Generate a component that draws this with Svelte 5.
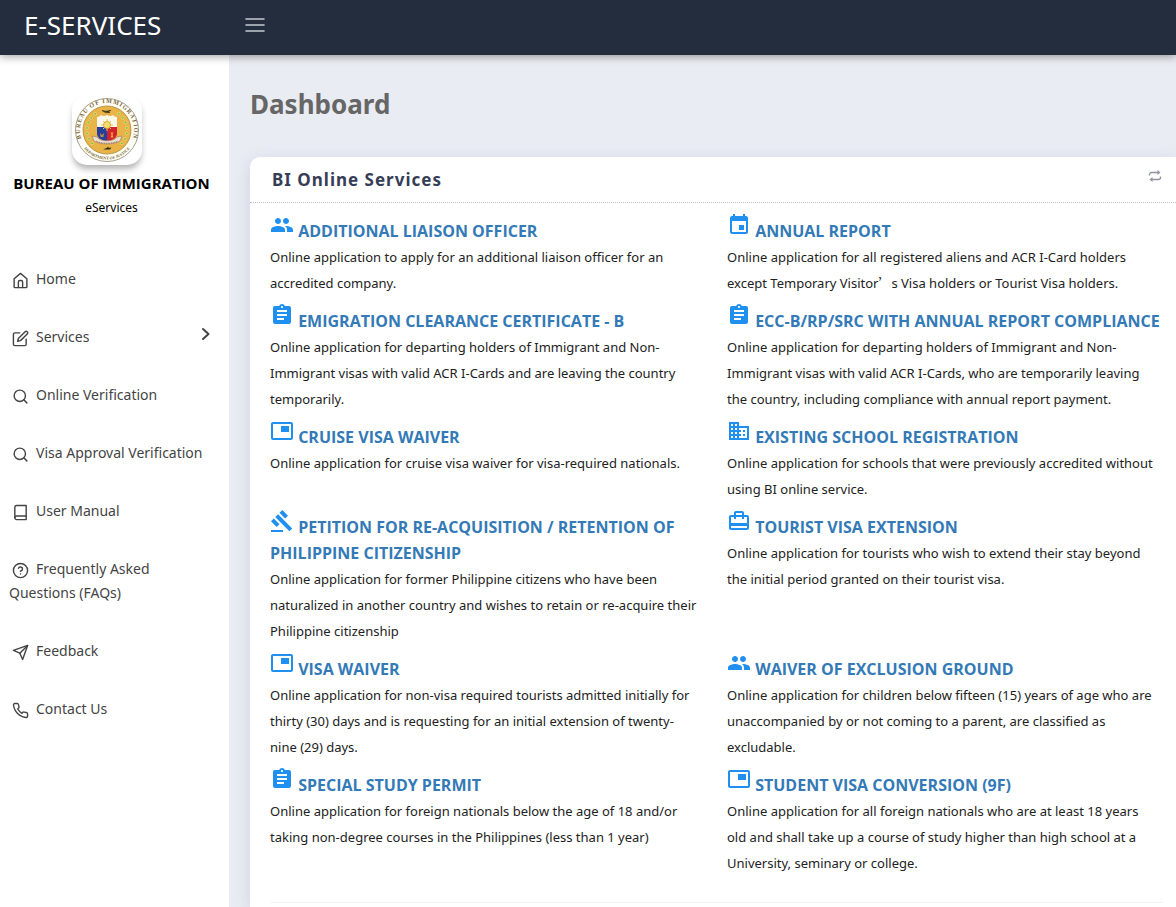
<script>
  const nav = [
    { label: 'Home', icon: 'home' },
    { label: 'Services', icon: 'edit', more: true },
    { label: 'Online Verification', icon: 'search' },
    { label: 'Visa Approval Verification', icon: 'search' },
    { label: 'User Manual', icon: 'book' },
    { label: 'Frequently Asked Questions (FAQs)', icon: 'help' },
    { label: 'Feedback', icon: 'send' },
    { label: 'Contact Us', icon: 'phone' }
  ];

  const lineIcons = {
    home: ['M3 9.5 12 2l9 7.5V21a1 1 0 0 1-1 1H4a1 1 0 0 1-1-1z', 'M9 22v-8a2 2 0 0 1 2-2h2a2 2 0 0 1 2 2v8'],
    edit: ['M11 4H4a2 2 0 0 0-2 2v14a2 2 0 0 0 2 2h14a2 2 0 0 0 2-2v-7', 'M18.5 2.5a2.121 2.121 0 0 1 3 3L12 15l-4 1 1-4z'],
    search: ['M3 11a8 8 0 1 0 16 0a8 8 0 1 0-16 0', 'M21 21l-4.35-4.35'],
    book: ['M4 19.5A2.5 2.5 0 0 1 6.5 17H20', 'M6.5 2H20v20H6.5A2.5 2.5 0 0 1 4 19.5v-15A2.5 2.5 0 0 1 6.5 2z'],
    help: ['M2 12a10 10 0 1 0 20 0a10 10 0 1 0-20 0', 'M9.09 9a3 3 0 0 1 5.83 1c0 2-3 3-3 3', 'M12 17h.01'],
    send: ['M22 2 11 13', 'M22 2l-7 20-4-9-9-4z'],
    phone: ['M22 16.92v3a2 2 0 0 1-2.18 2 19.79 19.79 0 0 1-8.63-3.07 19.5 19.5 0 0 1-6-6 19.79 19.79 0 0 1-3.07-8.67A2 2 0 0 1 4.11 2h3a2 2 0 0 1 2 1.72c.127.96.361 1.903.7 2.81a2 2 0 0 1-.45 2.11L8.09 9.91a16 16 0 0 0 6 6l1.27-1.27a2 2 0 0 1 2.11-.45c.907.339 1.85.573 2.81.7A2 2 0 0 1 22 16.92z']
  };

  const solidIcons = {
    group: 'M16 11c1.66 0 2.99-1.34 2.99-3S17.66 5 16 5s-3 1.34-3 3 1.34 3 3 3zm-8 0c1.66 0 2.99-1.34 2.99-3S9.66 5 8 5 5 6.34 5 8s1.34 3 3 3zm0 2c-2.33 0-7 1.17-7 3.5V19h14v-2.500c0-2.330-4.670-3.500-7-3.500zm8 0c-.29 0-.62.02-.97.05 1.160.84 1.970 1.970 1.970 3.450V19h6v-2.500c0-2.330-4.670-3.500-7-3.500z',
    event: 'M17 12h-5v5h5v-5zM16 1v2H8V1H6v2H5c-1.110 0-1.990.9-1.990 2L3 19a2 2 0 0 0 2 2h14c1.100 0 2-.9 2-2V5c0-1.100-.9-2-2-2h-1V1h-2zm3 18H5V8h14v11z',
    clipboard: 'M19 3h-4.180C14.400 1.840 13.300 1 12 1s-2.400.84-2.820 2H5c-1.100 0-2 .9-2 2v14c0 1.100.9 2 2 2h14c1.100 0 2-.9 2-2V5c0-1.100-.9-2-2-2zm-7 0c.55 0 1 .45 1 1s-.45 1-1 1-1-.45-1-1 .45-1 1-1zm2 14H7v-2h7v2zm3-4H7v-2h10v2zm0-4H7V7h10v2z',
    pip: 'M19 7h-8v6h8V7zm2-4H3c-1.100 0-2 .9-2 2v14c0 1.100.9 1.980 2 1.980h18c1.100 0 2-.88 2-1.980V5c0-1.100-.9-2-2-2zm0 16.010H3V4.980h18v14.030z',
    building: 'M12 7V3H2v18h20V7H12zM6 19H4v-2h2v2zm0-4H4v-2h2v2zm0-4H4V9h2v2zm0-4H4V5h2v2zm4 12H8v-2h2v2zm0-4H8v-2h2v2zm0-4H8V9h2v2zm0-4H8V5h2v2zm10 12h-8v-2h2v-2h-2v-2h2v-2h-2V9h8v10zm-2-8h-2v2h2v-2zm0 4h-2v2h2v-2z',
    gavel: 'M1 21h12v2H1zM5.245 8.070l2.830-2.830 14.140 14.140-2.830 2.830zM12.317 1l5.657 5.656-2.830 2.830-5.654-5.660zM3.825 9.485l5.657 5.657-2.828 2.828-5.657-5.657z',
    travel: 'M20 6h-3V4c0-1.110-.89-2-2-2H9c-1.110 0-2 .89-2 2v2H4c-1.110 0-2 .89-2 2v11c0 1.110.89 2 2 2h16c1.110 0 2-.89 2-2V8c0-1.110-.89-2-2-2zM9 4h6v2H9V4zm11 15H4v-2h16v2zm0-5H4V8h3v2h2V8h6v2h2V8h3v6z'
  };

  const services = [
    { icon: 'group', title: 'ADDITIONAL LIAISON OFFICER', text: 'Online application to apply for an additional liaison officer for an accredited company.' },
    { icon: 'event', title: 'ANNUAL REPORT', text: 'Online application for all registered aliens and ACR I-Card holders except Temporary Visitor’s Visa holders or Tourist Visa holders.' },
    { icon: 'clipboard', title: 'EMIGRATION CLEARANCE CERTIFICATE - B', text: 'Online application for departing holders of Immigrant and Non-Immigrant visas with valid ACR I-Cards and are leaving the country temporarily.' },
    { icon: 'clipboard', title: 'ECC-B/RP/SRC WITH ANNUAL REPORT COMPLIANCE', text: 'Online application for departing holders of Immigrant and Non-Immigrant visas with valid ACR I-Cards, who are temporarily leaving the country, including compliance with annual report payment.' },
    { icon: 'pip', title: 'CRUISE VISA WAIVER', text: 'Online application for cruise visa waiver for visa-required nationals.' },
    { icon: 'building', title: 'EXISTING SCHOOL REGISTRATION', text: 'Online application for schools that were previously accredited without using BI online service.' },
    { icon: 'gavel', title: 'PETITION FOR RE-ACQUISITION / RETENTION OF PHILIPPINE CITIZENSHIP', text: 'Online application for former Philippine citizens who have been naturalized in another country and wishes to retain or re-acquire their Philippine citizenship' },
    { icon: 'travel', title: 'TOURIST VISA EXTENSION', text: 'Online application for tourists who wish to extend their stay beyond the initial period granted on their tourist visa.' },
    { icon: 'pip', title: 'VISA WAIVER', text: 'Online application for non-visa required tourists admitted initially for thirty (30) days and is requesting for an initial extension of twenty-nine (29) days.' },
    { icon: 'group', title: 'WAIVER OF EXCLUSION GROUND', text: 'Online application for children below fifteen (15) years of age who are unaccompanied by or not coming to a parent, are classified as excludable.' },
    { icon: 'clipboard', title: 'SPECIAL STUDY PERMIT', text: 'Online application for foreign nationals below the age of 18 and/or taking non-degree courses in the Philippines (less than 1 year)' },
    { icon: 'pip', title: 'STUDENT VISA CONVERSION (9F)', text: 'Online application for all foreign nationals who are at least 18 years old and shall take up a course of study higher than high school at a University, seminary or college.' }
  ];

  // Small laurel dots on both sides of the seal's shield
  const dots = [-54, -38, -22, -6, 10, 26, 42].flatMap((deg) => {
    const a = (deg * Math.PI) / 180;
    const y = 35 + 20 * Math.sin(a);
    const dx = 20 * Math.cos(a);
    return [{ x: 35 + dx, y }, { x: 35 - dx, y }];
  });
</script>

<div class="app">
  <header class="topbar">
    <a class="brand" href="#home">E-SERVICES</a>
    <button class="burger" type="button" aria-label="Toggle menu">
      <svg width="20" height="16" viewBox="0 0 20 16" aria-hidden="true">
        <path d="M1 2h18M1 8h18M1 14h18" stroke="#c5cad2" stroke-width="1.600" stroke-linecap="round" />
      </svg>
    </button>
  </header>

  <div class="body">
    <aside class="sidebar">
      <div class="profile">
        <div class="seal">
          <svg width="70" height="70" viewBox="0 0 70 70" aria-hidden="true">
            <defs>
              <path id="arc-top" d="M17.600 55.700a27 27 0 1 1 34.800 0" />
              <path id="arc-bottom" d="M12 53.500a29.500 29.500 0 0 0 46 0" />
            </defs>
            <circle cx="35" cy="35" r="31.500" fill="#fffdf4" stroke="#8e8a72" stroke-width=".8" />
            <circle cx="35" cy="35" r="24" fill="#e9b348" stroke="#a98a3c" stroke-width=".8" />
            <text class="ring"><textPath href="#arc-top" startOffset="50%" text-anchor="middle">BUREAU OF IMMIGRATION</textPath></text>
            <text class="ring low"><textPath href="#arc-bottom" startOffset="50%" text-anchor="middle">DEPARTMENT OF JUSTICE</textPath></text>
            {#each dots as d}
              <circle cx={d.x} cy={d.y} r="1.400" fill="#93b838" stroke="#f5e896" stroke-width=".6" />
            {/each}
            <path d="M30 15.500l4 .8 5-1-3 1.500 2 .8h-4.500z" fill="#3b3216" stroke="#3b3216" stroke-width=".6" />
            <path d="M25 22c2 0 3-1 4-2 2 1.500 4 1 6 0 2 1 4 1.500 6 0 1 1 2 2 4 2v10H25z" fill="#fbf8ea" />
            <path d="M25 32h10v14.500c-6-1-10-4-10-8z" fill="#243f9c" />
            <path d="M45 32H35v14.500c6-1 10-4 10-8z" fill="#d3222d" />
            <path d="M35 24v12M29 30h12M31 26l8 8M39 26l-8 8" stroke="#e9c75d" stroke-width="1" />
            <circle cx="35" cy="30" r="3.500" fill="#f3df6f" stroke="#d49c1d" stroke-width=".8" />
            <path d="M28 38l2 2 2-2-.5 4h-3z" fill="#b58d49" />
            <path d="M38.500 37.500h3l-1 2 1 3h-3l1-2.500z" fill="#f0a53d" />
            <path d="M20 41l5 1c3 5 17 5 20 0l5-1-2 5c-6 4-20 4-26 0z" fill="#ece0d2" stroke="#a3816a" stroke-width=".7" />
            <path d="M24 46c5 3 17 3 22 0" fill="none" stroke="#9a6a5a" stroke-width="1" stroke-dasharray="1 .7" />
            <path d="M31 54.500h7l1.500-2-3 .5v-1.500l-2 1.500z" fill="#2f2b1a" />
          </svg>
        </div>
        <strong>BUREAU OF IMMIGRATION</strong>
        <span>eServices</span>
      </div>

      <nav>
        {#each nav as item}
          <a href="#{item.icon}">
            <span class="label">
              <svg width="17" height="17" viewBox="0 0 24 24" aria-hidden="true">
                {#each lineIcons[item.icon] as d}<path {d} />{/each}
              </svg>{item.label}
            </span>
            {#if item.more}
              <svg class="chevron" width="10" height="14" viewBox="0 0 10 14" aria-hidden="true"><path d="M2 2l5.500 5L2 12" /></svg>
            {/if}
          </a>
        {/each}
      </nav>
    </aside>

    <main>
      <h1>Dashboard</h1>
      <section class="card">
        <div class="card-head">
          <h2>BI Online Services</h2>
          <button class="reload" type="button" aria-label="Reload">
            <svg width="14" height="14" viewBox="0 0 14 14" aria-hidden="true">
              <path d="M1.500 6.500V5.500a2 2 0 0 1 2-2h7M12.500 7.500v1a2 2 0 0 1-2 2h-7" fill="none" stroke="#8f959e" stroke-width="1.300" />
              <path d="M9.500 1l3 2.500-3 2.500zM4.500 8l-3 2.500 3 2.500z" fill="#8f959e" />
            </svg>
          </button>
        </div>
        <div class="services">
          {#each services as s}
            <article>
              <h3>
                <a href="#{s.icon}"><svg width="24" height="24" viewBox="0 0 24 24" aria-hidden="true"><path d={solidIcons[s.icon]} /></svg> {s.title}</a>
              </h3>
              <p>{#each s.text.split('’') as part, i}{#if i}<span class="wide">’</span>{/if}{part}{/each}</p>
            </article>
          {/each}
        </div>
        <hr />
      </section>
    </main>
  </div>
</div>

<style>
  :global(body) {
    margin: 0;
    overflow-x: hidden;
    background: #e9ecf2;
  }
  .app {
    display: flex;
    flex-direction: column;
    min-height: 100vh;
    font-family: 'Noto Sans', 'Open Sans', sans-serif;
    color: #212529;
  }
  a {
    color: inherit;
    text-decoration: none;
  }
  button {
    padding: 0;
    border: 0;
    background: none;
    cursor: pointer;
  }
  .topbar {
    position: relative;
    z-index: 1;
    display: flex;
    align-items: center;
    height: 49px;
    padding-bottom: 6px;
    background: #242d3e;
    box-shadow: 0 2px 8px rgba(0, 0, 0, 0.35);
  }
  .brand {
    box-sizing: border-box;
    width: 245px;
    padding-left: 24px;
    color: #fff;
    font-size: 26px;
  }
  .burger {
    display: flex;
  }
  .body {
    display: flex;
    flex: 1;
  }
  .sidebar {
    box-sizing: border-box;
    flex: none;
    width: 229px;
    padding-top: 40px;
    background: #fff;
  }
  .profile {
    display: flex;
    flex-direction: column;
    align-items: center;
    padding-right: 6px;
    color: #000;
  }
  .profile strong {
    margin-top: 8px;
    font-family: 'Open Sans', 'Noto Sans', sans-serif;
    font-size: 15px;
    line-height: 20px;
    white-space: nowrap;
  }
  .profile span {
    margin-top: 5px;
    font-size: 12px;
    line-height: 20px;
  }
  .seal {
    display: flex;
    margin-right: 9px;
    border-radius: 15px;
    background: #fff;
    box-shadow: 0 5px 6px -1px rgba(0, 0, 0, 0.3);
  }
  .ring {
    fill: #75653a;
    font-family: 'Liberation Serif', serif;
    font-size: 6px;
    font-weight: bold;
    letter-spacing: 1px;
  }
  .ring.low {
    font-size: 4px;
    letter-spacing: normal;
  }
  nav {
    display: flex;
    flex-direction: column;
    gap: 34px;
    margin-top: 49px;
    padding: 0 18px 0 9px;
    font-size: 14px;
    line-height: 24px;
    color: #444;
  }
  nav a {
    display: flex;
    justify-content: space-between;
  }
  .label svg {
    margin: 0 7px 0 3px;
    vertical-align: -5px;
  }
  nav svg {
    fill: none;
    stroke: #444;
    stroke-width: 2;
    stroke-linecap: round;
    stroke-linejoin: round;
  }
  .label {
    margin-right: -8px;
  }
  .chevron {
    margin-top: 2px;
  }
  main {
    flex: 1;
    min-width: 0;
    display: flex;
    flex-direction: column;
    padding: 31px 0 0 21px;
  }
  h1,
  h2,
  h3,
  p {
    margin: 0;
  }
  h1 {
    color: #666;
    font-size: 26px;
    line-height: 36px;
  }
  .card {
    flex: 1;
    margin-top: 35px;
    border-radius: 10px 0 0 0;
    background: #fff;
    box-shadow: 0 4px 16px rgba(120, 130, 190, 0.25);
  }
  .card-head {
    display: flex;
    justify-content: space-between;
    align-items: center;
    height: 45px;
    padding: 0 14px 0 22px;
    border-bottom: 1px dotted #bcc0c6;
  }
  h2 {
    color: #363d56;
    font-size: 17px;
    line-height: 26px;
    letter-spacing: 1px;
  }
  .reload {
    display: flex;
    margin-bottom: 8px;
  }
  .services {
    display: grid;
    grid-template-columns: 1fr 1fr;
    column-gap: 21px;
    padding: 3px 13px 0 20px;
  }
  article {
    padding-top: 7px;
  }
  h3 {
    color: #337ab7;
    font-family: 'Open Sans', 'Noto Sans', sans-serif;
    font-size: 16px;
    line-height: 26px;
  }
  h3 svg {
    fill: #2090f0;
  }
  p {
    padding-right: 8px;
    color: #222;
    font-size: 13px;
    line-height: 26px;
  }
  .wide {
    display: inline-block;
    font-family: 'Noto Sans CJK SC', sans-serif;
    line-height: 20px;
  }
  hr {
    margin: 26px 13px 0 20px;
    border: 0;
    border-top: 1px solid #f3f3f3;
  }
</style>
